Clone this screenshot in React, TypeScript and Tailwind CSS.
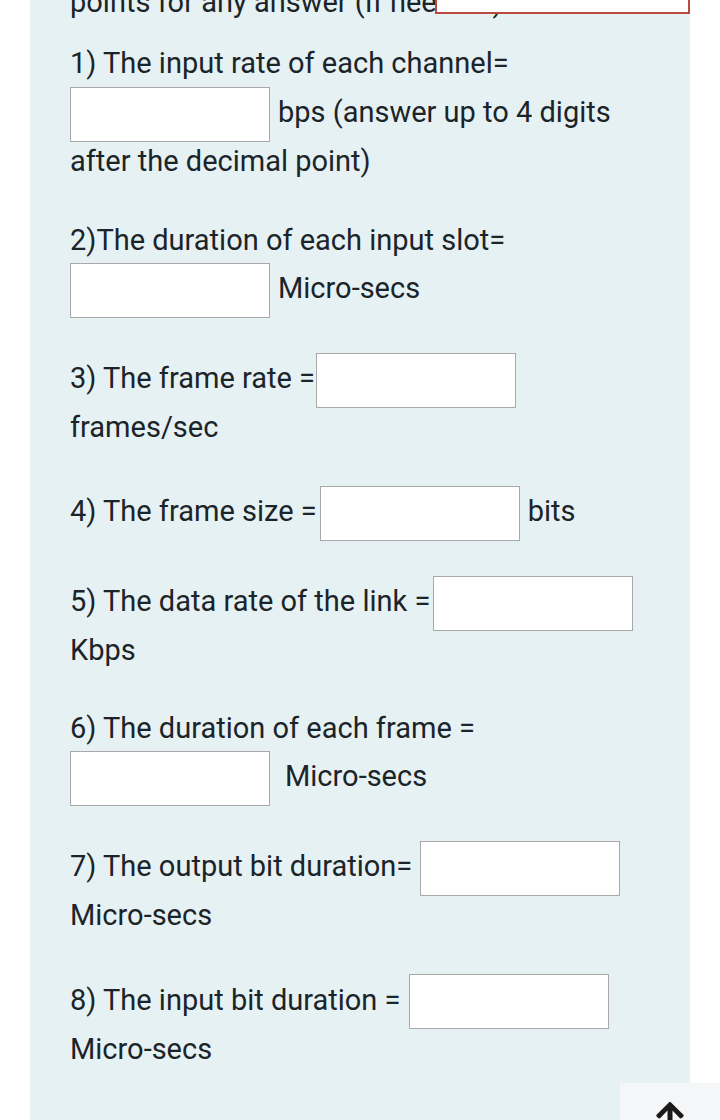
import { FaArrowUp } from 'react-icons/fa';

function Box({ className = '' }: { className?: string }) {
  return <span className={`block w-[200px] h-[55px] shrink-0 bg-white border border-[#a8a8a8] ${className}`} />;
}

function Line({ children, className = '' }: { children: React.ReactNode; className?: string }) {
  return <div className={`h-[49px] leading-[49px] whitespace-nowrap ${className}`}>{children}</div>;
}

export default function App() {
  return (
    <div className="relative h-[1120px] overflow-hidden bg-white text-[29px] text-[#1b2428]" style={{ fontFamily: 'Roboto, "Liberation Sans", sans-serif' }}>
      <div className="flow-root mx-[30px] h-full bg-[#e6f1f4] pl-[40px] pr-[20px]">
        <div className="relative -mt-[22px]">
          <Line>points for any answer (If needed.)</Line>
          <div className="absolute left-[365px] top-0 w-[255px] h-[36px] bg-white border-2 border-[#b84a3f]" />
        </div>

        {/* 1 */}
        <Line className="mt-[12px]">1) The input rate of each channel=</Line>
        <div className="-mt-[1px] flex items-start">
          <Box />
          <span className="ml-[8px] mt-[1px] leading-[49px] whitespace-nowrap">bps (answer up to 4 digits</span>
        </div>
        <Line className="-mt-[5px]">after the decimal point)</Line>

        {/* 2 */}
        <Line className="mt-[30px]">2)The duration of each input slot=</Line>
        <div className="-mt-[2px] flex items-start">
          <Box />
          <span className="ml-[8px] mt-[1px] leading-[49px]">Micro-secs</span>
        </div>

        {/* 3 */}
        <div className="mt-[35px] flex items-start">
          <span className="mt-[1px] leading-[49px] whitespace-nowrap">3) The frame rate =</span>
          <Box className="ml-[1px]" />
        </div>
        <Line className="-mt-[5px]">frames/sec</Line>

        {/* 4 */}
        <div className="mt-[34px] flex items-start">
          <span className="mt-[1px] leading-[49px] whitespace-nowrap">4) The frame size =</span>
          <Box className="ml-[3px]" />
          <span className="ml-[8px] mt-[1px] leading-[49px]">bits</span>
        </div>

        {/* 5 */}
        <div className="mt-[35px] flex items-start">
          <span className="mt-[1px] leading-[49px] whitespace-nowrap">5) The data rate of the link =</span>
          <Box className="ml-[3px]" />
        </div>
        <Line className="-mt-[5px]">Kbps</Line>

        {/* 6 */}
        <Line className="mt-[29px]">6) The duration of each frame =</Line>
        <div className="-mt-[2px] flex items-start">
          <Box />
          <span className="ml-[15px] mt-[1px] leading-[49px]">Micro-secs</span>
        </div>

        {/* 7 */}
        <div className="mt-[35px] flex items-start">
          <span className="mt-[1px] leading-[49px] whitespace-nowrap">7) The output bit duration=</span>
          <Box className="ml-[8px]" />
        </div>
        <Line className="-mt-[5px]">Micro-secs</Line>

        {/* 8 */}
        <div className="mt-[34px] flex items-start">
          <span className="mt-[2px] leading-[49px] whitespace-nowrap">8) The input bit duration =</span>
          <Box className="ml-[9px]" />
        </div>
        <Line className="-mt-[4px]">Micro-secs</Line>
      </div>

      <div className="absolute left-[620px] top-[1083px] w-[100px] h-[60px] bg-[#f4f6f8] flex justify-center pt-[17px]">
        <FaArrowUp className="w-[30px] h-[32px] text-[#1a1a1a]" />
      </div>
    </div>
  );
}
